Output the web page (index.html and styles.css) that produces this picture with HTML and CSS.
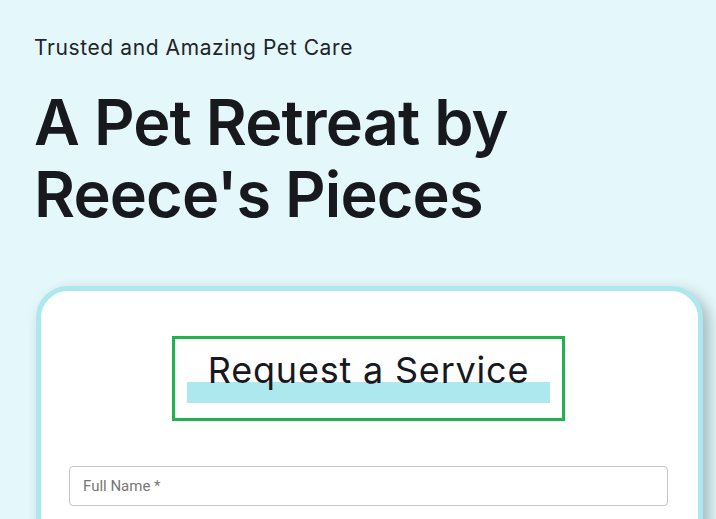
FILE: index.html
```html
<!DOCTYPE html>
<html lang="en">
<head>
<meta charset="utf-8">
<title>A Pet Retreat by Reece's Pieces</title>
<link rel="stylesheet" href="styles.css">
</head>
<body>
  <main class="hero">
    <p class="tagline">Trusted and Amazing Pet Care</p>
    <h1 class="headline">A Pet Retreat by<br>Reece's Pieces</h1>

    <section class="card">
      <div class="title-box">
        <h2 class="title">Request a Service</h2>
      </div>
      <form class="form">
        <input class="field" type="text" placeholder="Full Name *">
      </form>
    </section>
  </main>
</body>
</html>
```
FILE: styles.css
```css
html, body {
  margin: 0;
  padding: 0;
}

body {
  background: #e4f7fa;
  font-family: Inter, "Noto Sans", sans-serif;
  color: #17191e;
  overflow: hidden;
}

.hero {
  padding: 34px 13px 0 34px;
}

.tagline {
  margin: 0;
  font-size: 21px;
  line-height: 28px;
  font-weight: 400;
  color: #222428;
  letter-spacing: 0.6px;
}

.headline {
  margin: 24px 0 0;
  font-size: 63px;
  line-height: 72px;
  font-weight: 600;
  letter-spacing: -0.9px;
}

.card {
  margin-top: 56px;
  margin-left: 2px;
  background: #fff;
  border: 5px solid #ade8ef;
  border-radius: 32px;
  box-shadow: 6px 6px 14px rgba(40, 70, 75, 0.35);
  padding: 45px 30px 40px 28px;
}

.title-box {
  width: 387px;
  height: 79px;
  margin: 0 auto;
  border: 3px solid #22b14c;
  display: flex;
  justify-content: center;
  align-items: flex-start;
}

.title {
  margin: 8px 0 0;
  padding: 0 21px;
  height: 56px;
  font-size: 36px;
  line-height: 46px;
  font-weight: 400;
  letter-spacing: 0.8px;
  background: linear-gradient(to bottom, transparent 35px, #ade8ef 35px, #ade8ef 56px);
  background-repeat: no-repeat;
}

.form {
  margin-top: 45px;
}

.field {
  display: block;
  box-sizing: border-box;
  width: 100%;
  height: 40px;
  margin: 0;
  border: 1px solid #c6c6c6;
  border-radius: 4px;
  padding: 0 13px;
  font-family: Roboto, "Liberation Sans", sans-serif;
  font-size: 15px;
  color: #333;
  background: #fff;
}

.field::placeholder {
  color: #777;
}
```
